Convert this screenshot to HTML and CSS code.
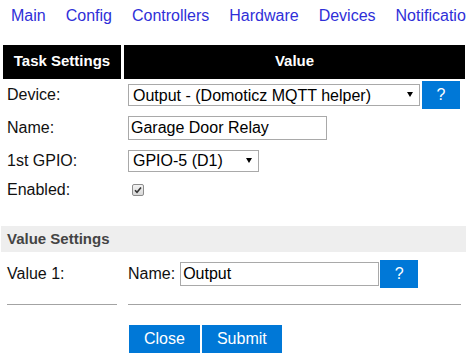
FILE: index.html
```html
<!DOCTYPE html>
<html lang="en">
<head>
    <meta charset="UTF-8">
    <meta name="viewport" content="width=device-width, initial-scale=1.0">
    <title>Task Settings | ESP Easy</title>
    <link rel="stylesheet" href="styles.css">
</head>
<body>
    <div class="page">
        <nav class="menu">
            <a href="#">Main</a>
            <a href="#">Config</a>
            <a href="#">Controllers</a>
            <a href="#">Hardware</a>
            <a href="#">Devices</a>
            <a href="#">Notifications</a>
        </nav>

        <form class="task-form">
            <!-- Table header -->
            <div class="row head">
                <div class="cell">Task Settings</div>
                <div class="cell">Value</div>
            </div>

            <div class="row device">
                <div class="cell">Device:</div>
                <div class="cell field">
                    <span class="select device-select">
                        <select aria-label="Device">
                            <option>Output - (Domoticz MQTT helper)</option>
                        </select>
                    </span>
                    <a href="#" class="button help">?</a>
                </div>
            </div>

            <div class="row name">
                <div class="cell">Name:</div>
                <div class="cell field">
                    <input type="text" class="text-input name-input" value="Garage Door Relay" aria-label="Name">
                </div>
            </div>

            <div class="row gpio">
                <div class="cell">1st GPIO:</div>
                <div class="cell field">
                    <span class="select gpio-select">
                        <select aria-label="1st GPIO">
                            <option>GPIO-5 (D1)</option>
                        </select>
                    </span>
                </div>
            </div>

            <div class="row enabled">
                <div class="cell">Enabled:</div>
                <div class="cell field">
                    <span class="check" role="checkbox" aria-checked="true">
                        <svg width="8" height="8" viewBox="0 0 8 8"><path d="M1 4.2 L3 6.3 L7 1.5" fill="none" stroke="#333" stroke-width="1.6"/></svg>
                    </span>
                </div>
            </div>

            <!-- Values -->
            <div class="section-title">Value Settings</div>

            <div class="row value">
                <div class="cell">Value 1:</div>
                <div class="cell field">
                    <span class="field-label">Name:</span>
                    <input type="text" class="text-input value-input" value="Output" aria-label="Value name">
                    <a href="#" class="button help">?</a>
                </div>
            </div>

            <div class="row rule">
                <div class="cell"><hr></div>
                <div class="cell"><hr></div>
            </div>

            <div class="row actions">
                <div class="cell"></div>
                <div class="cell field">
                    <a href="#" class="button">Close</a>
                    <a href="#" class="button">Submit</a>
                </div>
            </div>
        </form>
    </div>
</body>
</html>
```

FILE: styles.css
```css
body {
    font-family: "Liberation Sans", Arial, sans-serif;
    font-size: 16px;
    margin: 0;
    padding: 0;
    background: #fff;
    color: #111;
}

.page {
    width: 465px;
    margin-left: 1px;
}

.menu {
    display: flex;
    gap: 20px;
    align-items: center;
    height: 31px;
    padding-left: 10px;
    margin-bottom: 14px;
    white-space: nowrap;
    overflow: hidden;
}

.menu a {
    color: #2f2fd8;
    text-decoration: none;
}

.row {
    display: grid;
    grid-template-columns: 118px 341px;
    column-gap: 3px;
    padding: 0 2px;
    align-items: center;
}

.cell {
    padding: 0 4px;
}

.field {
    display: flex;
    align-items: center;
    gap: 2px;
}

/* header */
.head .cell {
    background: #000;
    color: #fff;
    font-size: 15px;
    font-weight: bold;
    text-align: center;
    line-height: 20px;
    padding: 6px 4px 8px;
}

.device { height: 32px; }
.name { height: 33px; }
.gpio { height: 33px; }
.enabled { height: 25px; margin-bottom: 24px; }
.value { height: 43px; }
.rule { height: 19px; }
.actions { margin-top: 11px; }

.select {
    position: relative;
    display: inline-block;
}

.select select {
    appearance: none;
    -webkit-appearance: none;
    width: 100%;
    height: 22px;
    margin: 0;
    padding: 0 20px 0 4px;
    font: inherit;
    color: #000;
    background: #fff;
    border: 1px solid #a9a9a9;
    border-radius: 0;
    outline: none;
}

.select::after {
    content: "";
    position: absolute;
    right: 7px;
    top: 8px;
    border-left: 3px solid transparent;
    border-right: 3px solid transparent;
    border-top: 5px solid #000;
    pointer-events: none;
}

.device-select { width: 292px; }
.gpio-select { width: 131px; }

.text-input {
    box-sizing: border-box;
    height: 24px;
    margin: 0;
    padding: 0 2px;
    font: inherit;
    color: #000;
    border: 1px solid #a9a9a9;
    border-radius: 0;
    outline: none;
}

.name-input { width: 199px; }

.value-input {
    width: 199px;
    margin-left: 3px;
    margin-right: -1px;
}

.check {
    box-sizing: border-box;
    display: inline-flex;
    align-items: center;
    justify-content: center;
    width: 12px;
    height: 12px;
    margin-left: 4px;
    border: 1px solid #8c8c8c;
    border-radius: 2px;
    background: linear-gradient(#f2f2f2, #d8d8d8);
}

.section-title {
    height: 26px;
    line-height: 26px;
    padding-left: 6px;
    background: #eee;
    color: #444;
    font-size: 15px;
    font-weight: bold;
}

hr {
    border: 0;
    border-top: 1px solid #a3a3a3;
    margin: 0;
}

.button {
    display: inline-block;
    height: 28px;
    line-height: 28px;
    padding: 0 15px;
    background: #0078d7;
    color: #fff;
    text-decoration: none;
}

.help {
    width: 38px;
    padding: 0;
    text-align: center;
}

.actions .field {
    margin-left: 1px;
}
```
